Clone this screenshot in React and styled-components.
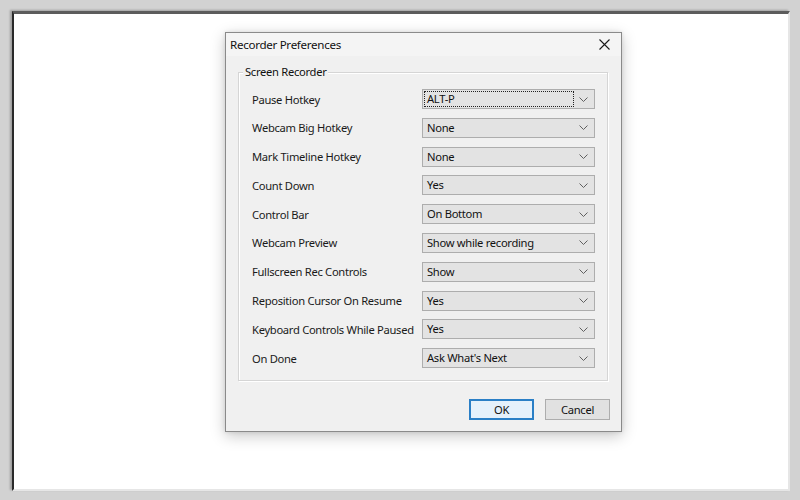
import styled, {createGlobalStyle} from "styled-components";

const GlobalStyle = createGlobalStyle`
  html, body {
    margin: 0;
    padding: 0;
    background: #d2d2d2;
  }
  body {
    width: 800px;
    height: 500px;
    overflow: hidden;
    font-family: "Noto Sans", "Open Sans", sans-serif;
    font-size: 11.2px;
    letter-spacing: -0.3px;
    color: #111;
  }
`;

const rows = [
  {label: "Pause Hotkey", value: "ALT-P", focused: true},
  {label: "Webcam Big Hotkey", value: "None"},
  {label: "Mark Timeline Hotkey", value: "None"},
  {label: "Count Down", value: "Yes"},
  {label: "Control Bar", value: "On Bottom"},
  {label: "Webcam Preview", value: "Show while recording"},
  {label: "Fullscreen Rec Controls", value: "Show"},
  {label: "Reposition Cursor On Resume", value: "Yes"},
  {label: "Keyboard Controls While Paused", value: "Yes"},
  {label: "On Done", value: "Ask What's Next"},
];

function Chevron() {
  return (
    <svg width="9" height="5" viewBox="0 0 9 5">
      <path d="M0.5 0.5 L4.5 4.5 L8.5 0.5" fill="none" stroke="#606060" strokeWidth="1" />
    </svg>
  );
}

function CloseIcon() {
  return (
    <svg width="11" height="11" viewBox="0 0 11 11">
      <path d="M0.5 0.5 L10.5 10.5 M10.5 0.5 L0.5 10.5" stroke="#1a1a1a" strokeWidth="1.1" />
    </svg>
  );
}

export default function App() {
  return (
    <>
      <GlobalStyle />
      <Frame>
        <Dialog>
          <TitleBar>
            <Title>Recorder Preferences</Title>
            <CloseButton>
              <CloseIcon />
            </CloseButton>
          </TitleBar>
          <Body>
            <GroupBox>
              <Legend>Screen Recorder</Legend>
              <RowList>
                {rows.map(row => (
                  <Row key={row.label}>
                    <Label>{row.label}</Label>
                    <Combo>
                      <ComboText $focused={row.focused}>{row.value}</ComboText>
                      <Arrow>
                        <Chevron />
                      </Arrow>
                    </Combo>
                  </Row>
                ))}
              </RowList>
            </GroupBox>
            <ButtonRow>
              <Button $primary>OK</Button>
              <Button>Cancel</Button>
            </ButtonRow>
          </Body>
        </Dialog>
      </Frame>
    </>
  );
}

const Frame = styled.div`
  box-sizing: border-box;
  margin: 11px 0 0 12px;
  width: 778px;
  height: 480px;
  background: #ffffff;
  border-top: 3px solid #5c5c5c;
  border-left: 2px solid #2a2a2a;
  border-right: 2px solid #e6e6e6;
  border-bottom: 2px solid #e6e6e6;
  box-shadow: -2px -1px 2px rgba(0, 0, 0, 0.25);
  padding: 18px 0 0 211px;
`;

const Dialog = styled.div`
  box-sizing: border-box;
  width: 397px;
  height: 400px;
  background: #f0f0f0;
  border: 1px solid #8a8a8a;
  box-shadow: 0 4px 14px rgba(0, 0, 0, 0.22), 0 0 4px rgba(0, 0, 0, 0.1);
  display: flex;
  flex-direction: column;
`;

const TitleBar = styled.div`
  height: 23px;
  display: flex;
  align-items: center;
  justify-content: space-between;
  padding: 0 11px 0 4px;
  background: #f4f4f4;
`;

const Title = styled.span`
  font-size: 11.6px;
`;

const CloseButton = styled.span`
  display: flex;
  align-items: center;
`;

const Body = styled.div`
  flex: 1;
  display: flex;
  flex-direction: column;
  padding: 16px 13px 11px 12px;
`;

const GroupBox = styled.div`
  position: relative;
  box-sizing: border-box;
  height: 309px;
  border: 1px solid #d5d5d5;
  box-shadow: inset 1px 1px 0 #ffffff, 1px 1px 0 #ffffff;
  padding: 16px 12px 0 13px;
`;

const Legend = styled.span`
  position: absolute;
  top: -9px;
  left: 4px;
  padding: 0 2px;
  background: #f0f0f0;
`;

const RowList = styled.div`
  display: flex;
  flex-direction: column;
  gap: 8.8px;
`;

const Row = styled.div`
  display: grid;
  grid-template-columns: 1fr 173px;
  align-items: center;
  height: 20px;
`;

const Label = styled.span`
  white-space: nowrap;
  color: #1a1a1a;
`;

const Combo = styled.div`
  box-sizing: border-box;
  width: 173px;
  height: 20px;
  display: flex;
  align-items: center;
  background: #e3e3e3;
  border: 1px solid #adadad;
  padding: 1px;
`;

const ComboText = styled.span`
  box-sizing: border-box;
  flex: 1;
  height: 16px;
  line-height: 14px;
  white-space: nowrap;
  padding-left: 2px;
  border: 1px dotted ${p => (p.$focused ? "#222" : "transparent")};
`;

const Arrow = styled.span`
  width: 19px;
  display: flex;
  justify-content: center;
  align-items: center;
`;

const ButtonRow = styled.div`
  margin-top: auto;
  display: flex;
  justify-content: flex-end;
  gap: 11px;
  margin-right: -2px;
`;

const Button = styled.div`
  box-sizing: border-box;
  width: 65px;
  height: 21px;
  display: flex;
  align-items: center;
  justify-content: center;
  background: ${p => (p.$primary ? "#e5f1fb" : "#e1e1e1")};
  border: ${p => (p.$primary ? "2px solid #2a7fc6" : "1px solid #adadad")};
`;
